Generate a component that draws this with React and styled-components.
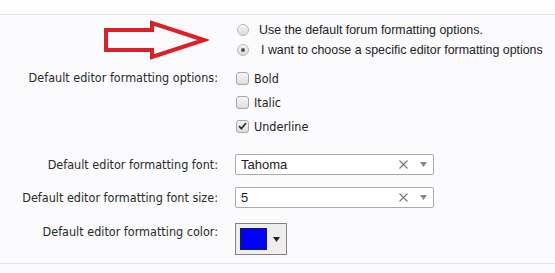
import React from 'react'
import styled, { createGlobalStyle } from 'styled-components'

const Global = createGlobalStyle`
  html, body { margin: 0; padding: 0; background: #fbfbfd; }
  body { font-family: "Liberation Sans", Arial, sans-serif; color: #222; }
`

const Page = styled.div`
  width: 555px;
  height: 273px;
  background: #fbfbfd;
  overflow: hidden;
`

const TopBar = styled.div`
  height: 14px;
  border-bottom: 1px solid #dce7ef;
  background: #fefefe;
`

const Form = styled.div`
  display: flex;
  flex-direction: column;
  border-bottom: 1px solid #dce7ef;
  height: 249px;
  box-sizing: border-box;
`

const Row = styled.div`
  display: grid;
  grid-template-columns: 218px 1fr;
  column-gap: 17px;
  margin-top: ${p => p.$mt || 0}px;
`

const Label = styled.div`
  font-family: "DejaVu Sans Condensed", Tahoma, sans-serif;
  font-size: 12.5px;
  color: #2a2a2a;
  text-align: right;
  line-height: ${p => p.$lh || 24}px;
  white-space: nowrap;
`

const ArrowCell = styled.div`
  display: flex;
  justify-content: flex-end;
  align-items: flex-start;
  padding-right: 9px;
`

const Options = styled.div`
  display: flex;
  flex-direction: column;
`

const Option = styled.label`
  display: flex;
  align-items: center;
  height: ${p => p.$h || 20}px;
  font-size: ${p => p.$tahoma ? 12.5 : 12.4}px;
  font-family: ${p => p.$tahoma ? '"DejaVu Sans Condensed", Tahoma, sans-serif' : '"Liberation Sans", Arial, sans-serif'};
  color: #222;
  white-space: nowrap;
`

const Radio = styled.span`
  width: 12px;
  height: 12px;
  border-radius: 50%;
  border: 1px solid #b8b8b8;
  background: linear-gradient(#f4f4f4, #dcdcdc);
  margin: 0 ${p => p.$gap || 9}px 0 2px;
  display: flex;
  align-items: center;
  justify-content: center;
  box-sizing: border-box;
  flex-shrink: 0;

  &::after {
    content: '';
    width: 4px;
    height: 4px;
    border-radius: 50%;
    background: #555;
    display: ${p => p.$checked ? 'block' : 'none'};
  }
`

const Check = styled.span`
  width: 13px;
  height: 13px;
  border-radius: 3px;
  border: 1px solid #a8a8a8;
  background: linear-gradient(#f6f6f6, #dedede);
  margin: 0 5px 0 1px;
  box-sizing: border-box;
  display: flex;
  align-items: center;
  justify-content: center;
  flex-shrink: 0;
  svg { display: block; }
`

const Select = styled.div`
  width: 199px;
  height: 21px;
  box-sizing: border-box;
  border: 1px solid #aaa;
  border-radius: 2px;
  background: #fff;
  display: flex;
  align-items: center;
  padding: 0 0 0 5px;
  font-size: 13px;
  color: #222;
`

const SelectValue = styled.span`
  flex: 1;
`

const Clear = styled.span`
  width: 20px;
  display: flex;
  justify-content: center;
  svg { display: block; }
`

const Caret = styled.span`
  width: 20px;
  display: flex;
  justify-content: center;
  svg { display: block; }
`

const ColorButton = styled.div`
  width: 52px;
  height: 32px;
  box-sizing: border-box;
  border: 1px solid #8f8077;
  background: #eeeeee;
  display: flex;
  align-items: center;
  padding-left: 4px;
  gap: 6px;
`

const Swatch = styled.span`
  width: 27px;
  height: 22px;
  box-sizing: border-box;
  background: #0000ff;
  border: 1px solid #1c1c3c;
`

const Arrow = () => (
  <svg width="106" height="42" viewBox="0 0 106 42">
    <path d="M3 10 H49 V3 L101 20 L49 37 V30 H3 Z" fill="none" stroke="#dd2027" strokeWidth="4" strokeLinejoin="miter" />
  </svg>
)

const SmallCaret = ({ color = '#888' }) => (
  <svg width="7" height="5" viewBox="0 0 7 5"><path d="M0 0 H7 L3.5 5 Z" fill={color} /></svg>
)

const ClearIcon = () => (
  <svg width="9" height="9" viewBox="0 0 9 9">
    <path d="M0.5 0.5 L8.5 8.5 M8.5 0.5 L0.5 8.5" stroke="#777" strokeWidth="1.1" />
  </svg>
)

const Tick = () => (
  <svg width="9" height="8" viewBox="0 0 9 8">
    <path d="M1 4.2 L3.4 6.6 L8 1" fill="none" stroke="#333" strokeWidth="1.8" />
  </svg>
)

const SelectBox = ({ value }) => (
  <Select>
    <SelectValue>{value}</SelectValue>
    <Clear><ClearIcon /></Clear>
    <Caret><SmallCaret /></Caret>
  </Select>
)

export default function App() {
  return (
    <Page>
      <Global />
      <TopBar />
      <Form>
        <Row $mt={5}>
          <ArrowCell><Arrow /></ArrowCell>
          <Options>
            <Option><Radio $gap={10} />Use the default forum formatting options.</Option>
            <Option><Radio $checked $gap={12} />I want to choose a specific editor formatting options</Option>
          </Options>
        </Row>
        <Row $mt={4}>
          <Label>Default editor formatting options:</Label>
          <Options>
            <Option $h={24} $tahoma><Check />Bold</Option>
            <Option $h={24} $tahoma><Check />Italic</Option>
            <Option $h={24} $tahoma><Check><Tick /></Check>Underline</Option>
          </Options>
        </Row>
        <Row $mt={16}>
          <Label $lh={21}>Default editor formatting font:</Label>
          <SelectBox value="Tahoma" />
        </Row>
        <Row $mt={12}>
          <Label $lh={21}>Default editor formatting font size:</Label>
          <SelectBox value="5" />
        </Row>
        <Row $mt={15}>
          <Label $lh={18}>Default editor formatting color:</Label>
          <ColorButton>
            <Swatch />
            <SmallCaret color="#222" />
          </ColorButton>
        </Row>
      </Form>
    </Page>
  )
}
